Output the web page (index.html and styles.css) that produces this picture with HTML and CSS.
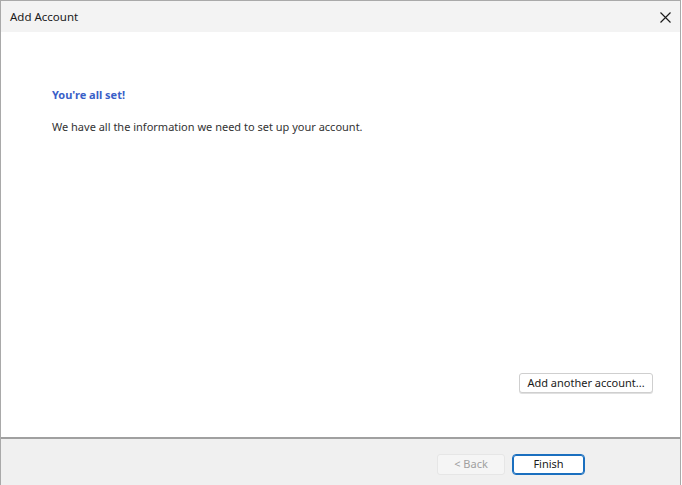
FILE: index.html
```html
<!DOCTYPE html>
<html>
<head>
<meta charset="utf-8">
<link rel="stylesheet" href="styles.css">
</head>
<body>
<div class="window">
  <div class="titlebar">
    <span class="title">Add Account</span>
    <svg class="close" width="11" height="11" viewBox="0 0 11 11"><path d="M0.5 0.5 L10.5 10.5 M10.5 0.5 L0.5 10.5" stroke="#1a1a1a" stroke-width="1.15" fill="none"/></svg>
  </div>
  <div class="content">
    <div class="heading">You're all set!</div>
    <div class="message">We have all the information we need to set up your account.</div>
    <div class="spacer"></div>
    <div class="another-row">
      <button class="btn another">Add another account...</button>
    </div>
  </div>
  <div class="footer">
    <button class="btn back" disabled>&lt; Back</button>
    <button class="btn finish">Finish</button>
  </div>
</div>
</body>
</html>
```
FILE: styles.css
```css
html, body {
  margin: 0;
  padding: 0;
  background: #ffffff;
}
body {
  font-family: "Noto Sans", "Open Sans", sans-serif;
  font-size: 11px;
  color: #222;
}
.window {
  width: 679px;
  height: 484px;
  border-top: 1px solid #a9a9a9;
  border-left: 1px solid #a9a9a9;
  border-right: 1px solid #a9a9a9;
  display: flex;
  flex-direction: column;
}
.titlebar {
  height: 31px;
  background: #f3f3f3;
  display: flex;
  align-items: center;
  justify-content: space-between;
  padding: 0 9px 0 9px;
  flex-shrink: 0;
}
.title {
  font-size: 11.5px;
  color: #1a1a1a;
}
.close {
  display: block;
  margin-top: 1px;
}
.content {
  flex: 1;
  background: #ffffff;
  display: flex;
  flex-direction: column;
  padding: 55px 27px 44px 51px;
  border-bottom: 2px solid #a0a0a0;
}
.heading {
  font-weight: bold;
  color: #3a5fc8;
  font-size: 11px;
  line-height: 16px;
}
.message {
  margin-top: 16px;
  color: #333;
  line-height: 16px;
}
.spacer {
  flex: 1;
}
.another-row {
  display: flex;
  justify-content: flex-end;
}
.btn {
  font-family: "Noto Sans", "Open Sans", sans-serif;
  font-size: 11px;
  background: #ffffff;
  border: 1px solid #cfcfcf;
  border-radius: 3px;
  color: #1a1a1a;
  padding: 0 0 1px 0;
  height: 20px;
  line-height: 16px;
}
.another {
  width: 134px;
  box-shadow: 0 1px 0 #e0e0e0;
}
.footer {
  height: 46px;
  background: #f0f0f0;
  display: flex;
  align-items: flex-start;
  justify-content: flex-end;
  gap: 7px;
  padding: 15px 95px 0 0;
  box-sizing: border-box;
}
.back {
  width: 68px;
  height: 21px;
  background: #f5f5f5;
  border-color: #e6e6e6;
  color: #a0a0a0;
}
.finish {
  width: 73px;
  height: 21px;
  border: 1px solid #1a6fbf;
  box-shadow: inset 0 0 0 1px #1a6fbf;
  border-radius: 4px;
}
```
